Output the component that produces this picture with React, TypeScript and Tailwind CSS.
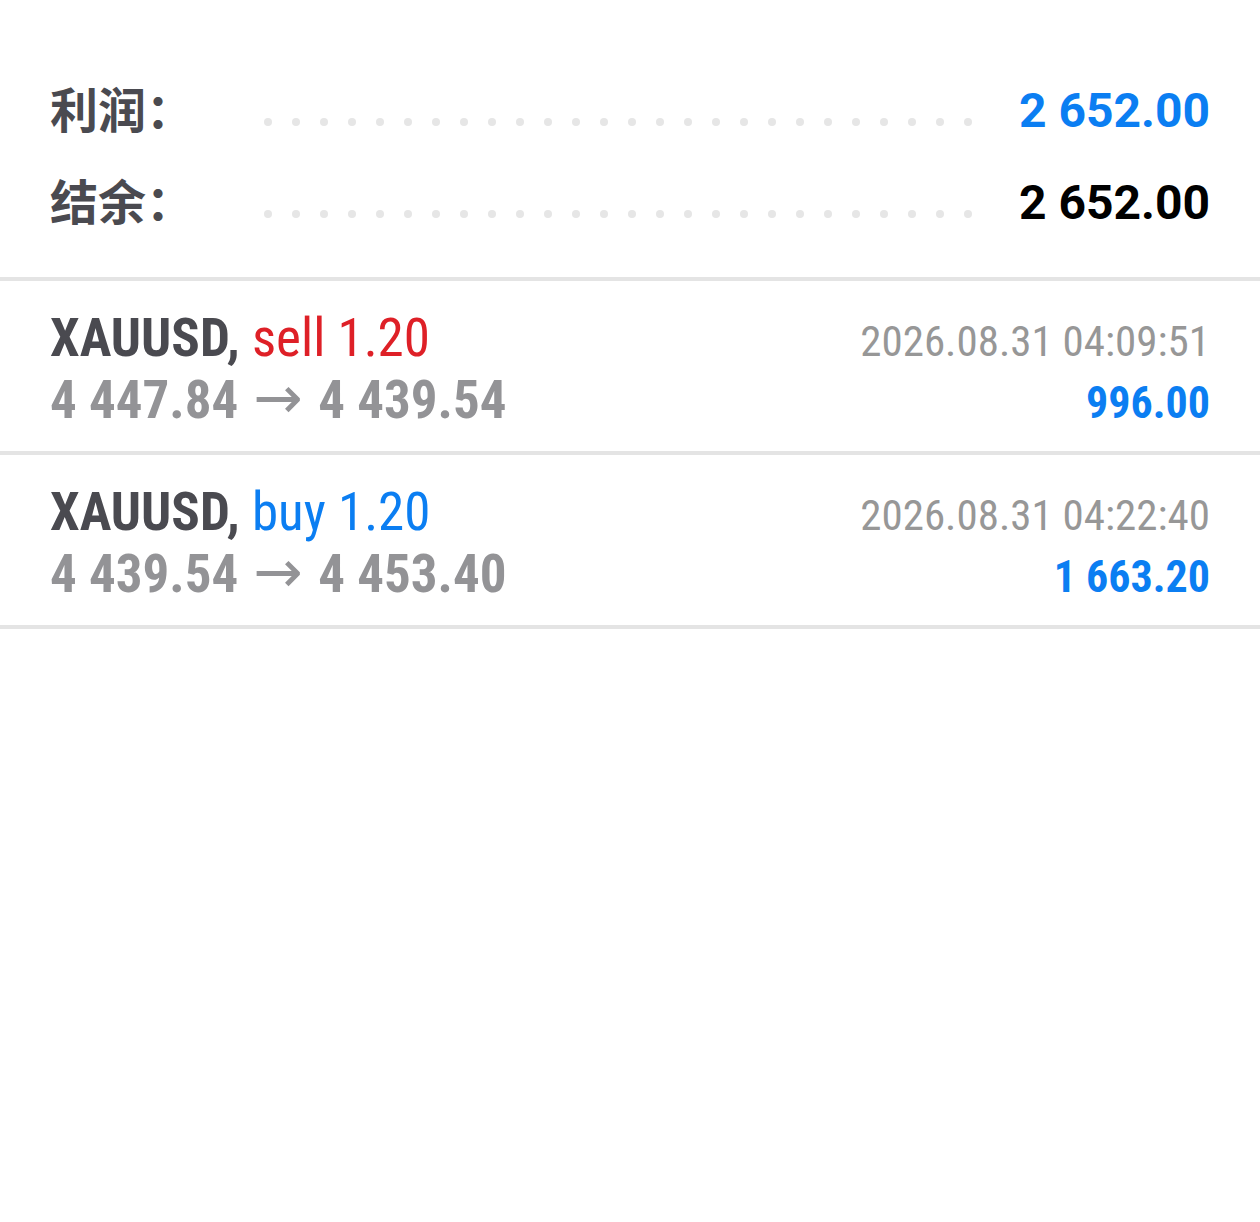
const dots = Array.from({ length: 26 })

function SummaryRow({ label, value, valueClass }: { label: string; value: string; valueClass: string }) {
  return (
    <div className="flex items-center h-[92px]">
      <div className="w-[214px] mb-[8px] text-[48px] font-bold text-[#4a4a50] leading-none [font-family:'Noto_Sans_CJK_SC',sans-serif]">
        {label}
      </div>
      <div className="flex gap-[20px] mt-[22px]">
        {dots.map((_, i) => (
          <span key={i} className="w-2 h-2 rounded-full bg-[#e6e6e6]" />
        ))}
      </div>
      <div className={`ml-auto text-[48px] font-bold leading-none [font-family:Roboto,sans-serif] ${valueClass}`}>
        {value}
      </div>
    </div>
  )
}

type Trade = {
  side: 'sell' | 'buy'
  volume: string
  open: string
  close: string
  time: string
  profit: string
}

const trades: Trade[] = [
  { side: 'sell', volume: '1.20', open: '4 447.84', close: '4 439.54', time: '2026.08.31 04:09:51', profit: '996.00' },
  { side: 'buy', volume: '1.20', open: '4 439.54', close: '4 453.40', time: '2026.08.31 04:22:40', profit: '1 663.20' },
]

function TradeRow({ t }: { t: Trade }) {
  return (
    <div className="h-[174px] pt-[27px] px-[50px] border-b-4 border-[#e4e4e4] [font-family:'Roboto_Condensed',Roboto,sans-serif]">
      <div className="flex items-baseline justify-between h-[60px] leading-[60px]">
        <div className="text-[53px]">
          <span className="font-bold text-[#4a4a50]">XAUUSD, </span>
          <span className={t.side === 'sell' ? 'text-[#de2027]' : 'text-[#0b7ef2]'}>
            {t.side} {t.volume}
          </span>
        </div>
        <div className="text-[43px] text-[#979797]">{t.time}</div>
      </div>
      <div className="flex items-baseline justify-between h-[60px] leading-[60px]">
        <div className="text-[53px] font-bold text-[#939396]">
          {t.open}{' '}
          <span className="mx-[3px] font-normal text-[59px] [font-family:'DejaVu_Sans',sans-serif]">→</span>{' '}
          {t.close}
        </div>
        <div className="text-[44px] font-bold text-[#0b7ef2]">{t.profit}</div>
      </div>
    </div>
  )
}

export default function App() {
  return (
    <div className="min-h-[1222px] bg-white">
      <div className="pt-[65px] pb-[28px] px-[50px] border-b-4 border-[#e4e4e4]">
        <SummaryRow label="利润：" value="2 652.00" valueClass="text-[#0b7ef2]" />
        <SummaryRow label="结余：" value="2 652.00" valueClass="text-black" />
      </div>
      {trades.map((t, i) => (
        <TradeRow key={i} t={t} />
      ))}
    </div>
  )
}
